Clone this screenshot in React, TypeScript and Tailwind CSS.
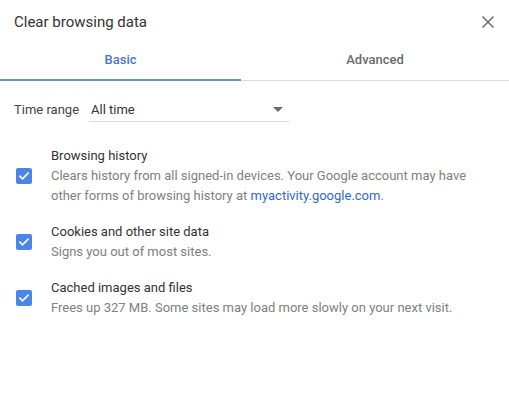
const items = [
  {
    title: "Browsing history",
    desc: (
      <>
        Clears history from all signed-in devices. Your Google account may have other forms of browsing history at{" "}
        <span className="text-[#3367d6]">myactivity.google.com</span>.
      </>
    ),
  },
  { title: "Cookies and other site data", desc: "Signs you out of most sites." },
  { title: "Cached images and files", desc: "Frees up 327 MB. Some sites may load more slowly on your next visit." },
]

function Check() {
  return (
    <div className="w-4 h-4 rounded-[2px] bg-[#4a86e8] flex items-center justify-center shrink-0">
      <svg width="12" height="12" viewBox="0 0 24 24" fill="none" stroke="white" strokeWidth="3.5" strokeLinecap="square">
        <path d="M4 12.5l5 5 11-11" />
      </svg>
    </div>
  )
}

export default function App() {
  return (
    <div className="w-[509px] h-[401px] bg-white font-['Roboto',sans-serif] text-[#333]">
      <div className="h-[40px] flex items-center justify-between pl-[14px] pr-[14px] pt-[4px]">
        <div className="text-[15px]">Clear browsing data</div>
        <svg width="14" height="14" viewBox="0 0 14 14" stroke="#6b6b6b" strokeWidth="1.5">
          <path d="M1.5 1.5l11 11M12.5 1.5l-11 11" />
        </svg>
      </div>
      <div className="flex h-[41px] border-b border-[#dcdcdc]">
        <div className="w-[241px] flex items-center justify-center text-[13px] font-medium text-[#4a78c2] border-b-2 border-[#6a93c6] -mb-px">
          Basic
        </div>
        <div className="flex-1 flex items-center justify-center text-[13px] font-medium text-[#6b6b6b]">Advanced</div>
      </div>
      <div className="flex items-center mt-[17px] pl-[14px] h-[24px]">
        <span className="text-[13px] text-[#444] w-[77px]">Time range</span>
        <div className="w-[200px] h-[24px] border-b border-[#dadada] flex items-center justify-between pl-[2px] pr-[6px] -ml-[2px]">
          <span className="text-[13px] text-[#333]">All time</span>
          <svg width="10" height="5" viewBox="0 0 10 5"><path d="M0 0h10L5 5z" fill="#6b6b6b" /></svg>
        </div>
      </div>
      <div className="mt-[24px] flex flex-col gap-[16px]">
        {items.map((it) => (
          <div key={it.title} className="flex items-center pl-[16px]">
            <Check />
            <div className="ml-[19px] text-[13px] leading-[20px]">
              <div className="text-[#333]">{it.title}</div>
              <div className="text-[#808080] pr-[40px]">{it.desc}</div>
            </div>
          </div>
        ))}
      </div>
    </div>
  )
}
